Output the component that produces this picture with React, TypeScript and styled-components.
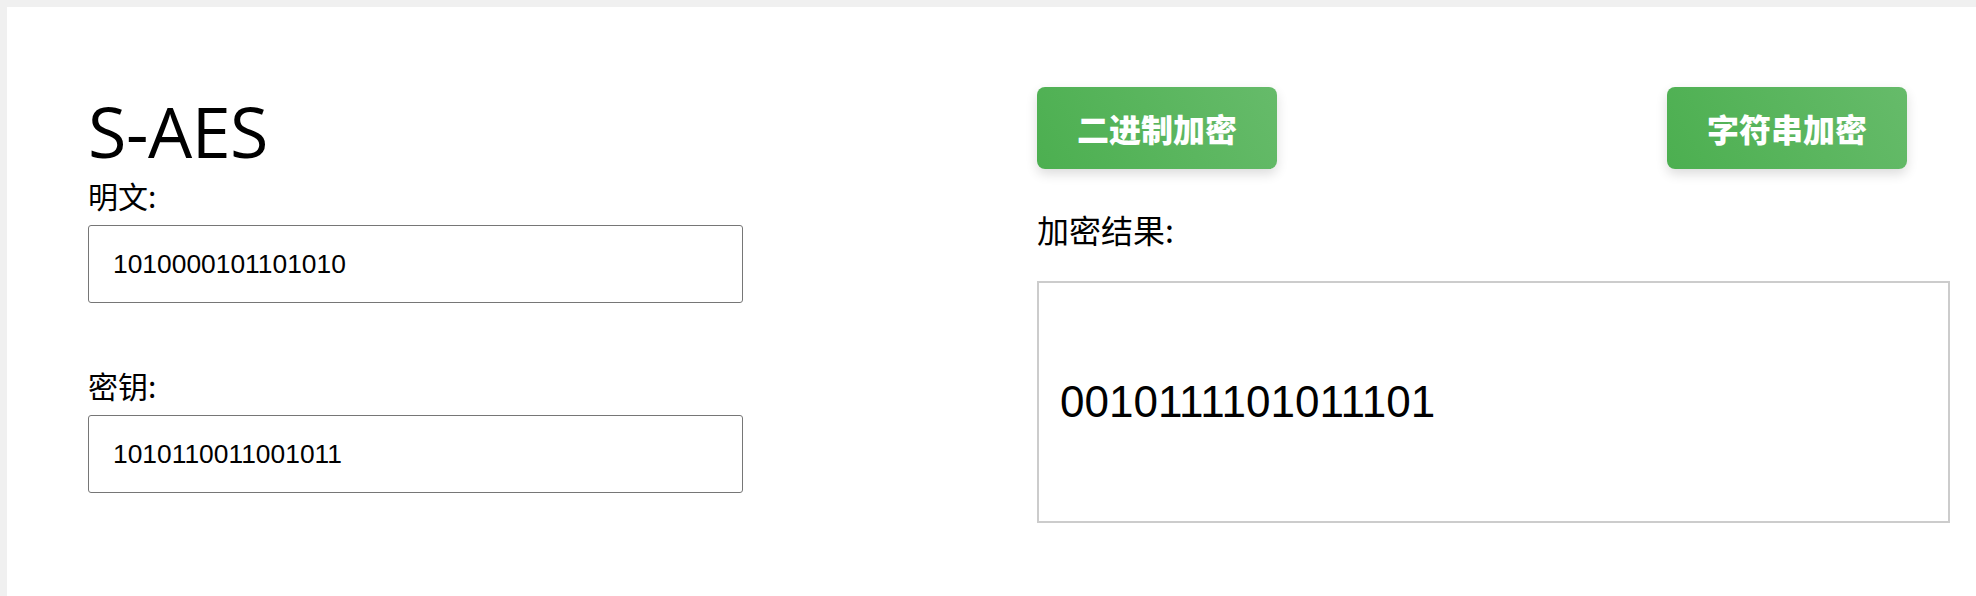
import React from "react";
import styled, { createGlobalStyle } from "styled-components";

const GlobalStyle = createGlobalStyle`
  html, body {
    margin: 0;
    padding: 0;
    background: #f0f0f0;
  }
  body {
    font-family: "Open Sans", "Noto Sans CJK SC", sans-serif;
    color: #000;
    overflow: hidden;
  }
`;

const Page = styled.div`
  margin: 7px 0 0 7px;
  min-height: calc(100vh - 7px);
  background: #ffffff;
  display: flex;
  align-items: flex-start;
  padding: 80px 0 0 81px;
  box-sizing: border-box;
`;

const LeftColumn = styled.section`
  width: 655px;
  display: flex;
  flex-direction: column;
  padding-top: 6px;
`;

const RightColumn = styled.section`
  margin-left: 294px;
  width: 913px;
  display: flex;
  flex-direction: column;
`;

const Title = styled.h1`
  margin: 0;
  font-family: "Open Sans", "Noto Sans CJK SC", sans-serif;
  font-weight: 400;
  font-size: 70px;
  line-height: 76px;
  letter-spacing: -0.5px;
`;

const Label = styled.label<{ $size?: number; $top?: number }>`
  display: block;
  font-family: "Noto Sans CJK SC", sans-serif;
  font-size: ${(p) => p.$size ?? 30}px;
  line-height: ${(p) => (p.$size ?? 30) + 8}px;
  margin-top: ${(p) => p.$top ?? 0}px;
`;

const TextInput = styled.input<{ $top?: number }>`
  box-sizing: border-box;
  width: 655px;
  height: 78px;
  margin-top: ${(p) => p.$top ?? 0}px;
  padding: 0 24px;
  border: 1px solid #767676;
  border-radius: 3px;
  font-family: "Liberation Sans", Arial, sans-serif;
  font-size: 26.4px;
  color: #000;
  background: #fff;
  outline: none;
`;

const ButtonRow = styled.div`
  width: 870px;
  display: flex;
  justify-content: space-between;
`;

const ActionButton = styled.button`
  width: 240px;
  height: 82px;
  border: none;
  border-radius: 8px;
  background: linear-gradient(60deg, #4caf50 0%, #66bb6a 100%);
  box-shadow: 0 5px 12px rgba(0, 0, 0, 0.14);
  color: #ffffff;
  font-family: "Noto Sans CJK SC", sans-serif;
  font-weight: 900;
  font-size: 32px;
  letter-spacing: 0;
  cursor: pointer;
  padding: 0;
`;

const ResultBox = styled.div`
  box-sizing: border-box;
  width: 913px;
  height: 242px;
  margin-top: 32px;
  border: 2px solid #cccccc;
  display: flex;
  align-items: center;
  padding-left: 21px;
  font-family: "Liberation Sans", Arial, sans-serif;
  font-size: 44px;
`;

export default function App() {
  return (
    <>
      <GlobalStyle />
      <Page>
        <LeftColumn>
          <Title>S-AES</Title>
          <Label $top={7}>明文:</Label>
          <TextInput $top={11} defaultValue="1010000101101010" />
          <Label $top={63}>密钥:</Label>
          <TextInput $top={11} defaultValue="1010110011001011" />
        </LeftColumn>
        <RightColumn>
          <ButtonRow>
            <ActionButton>二进制加密</ActionButton>
            <ActionButton>字符串加密</ActionButton>
          </ButtonRow>
          <Label $size={32} $top={40}>加密结果:</Label>
          <ResultBox>0010111101011101</ResultBox>
        </RightColumn>
      </Page>
    </>
  );
}
